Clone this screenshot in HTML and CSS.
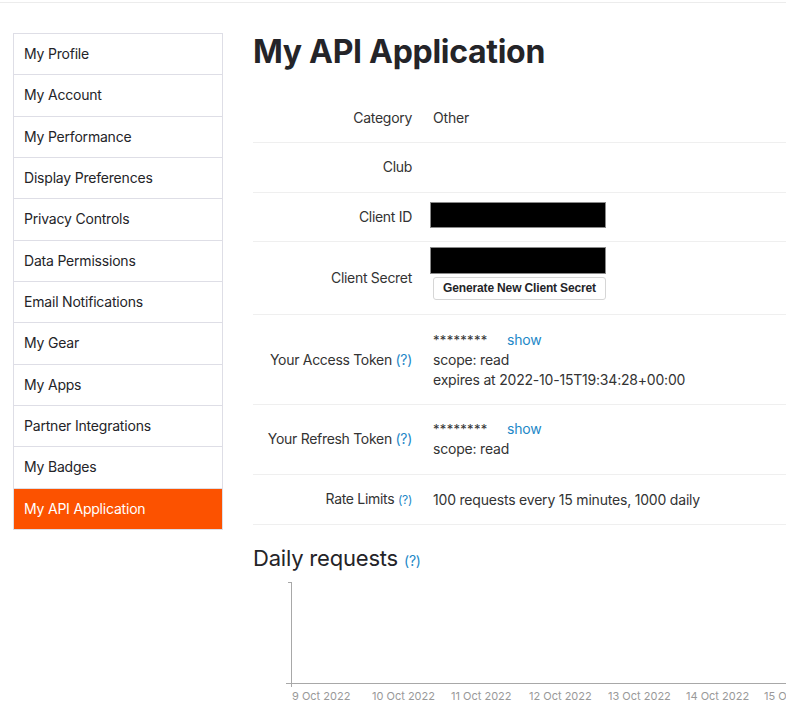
FILE: index.html
```html
<!DOCTYPE html>
<html lang="en">
<head>
<meta charset="utf-8">
<title>My API Application</title>
<link rel="stylesheet" href="styles.css">
</head>
<body>
<div class="topbar"></div>
<div class="page">
  <nav class="sidebar">
    <a class="nav-item" href="#">My Profile</a>
    <a class="nav-item" href="#">My Account</a>
    <a class="nav-item" href="#">My Performance</a>
    <a class="nav-item" href="#">Display Preferences</a>
    <a class="nav-item" href="#">Privacy Controls</a>
    <a class="nav-item" href="#">Data Permissions</a>
    <a class="nav-item" href="#">Email Notifications</a>
    <a class="nav-item" href="#">My Gear</a>
    <a class="nav-item" href="#">My Apps</a>
    <a class="nav-item" href="#">Partner Integrations</a>
    <a class="nav-item" href="#">My Badges</a>
    <a class="nav-item active" href="#">My API Application</a>
  </nav>
  <main class="content">
    <h1 class="title">My API Application</h1>
    <div class="table">
      <div class="row">
        <div class="label">Category</div>
        <div class="value">Other</div>
      </div>
      <div class="row">
        <div class="label">Club</div>
        <div class="value"></div>
      </div>
      <div class="row">
        <div class="label">Client ID</div>
        <div class="value"><span class="redact redact-id"></span></div>
      </div>
      <div class="row">
        <div class="label">Client Secret</div>
        <div class="value">
          <span class="redact redact-secret"></span>
          <button class="btn" type="button">Generate New Client Secret</button>
        </div>
      </div>
      <div class="row">
        <div class="label">Your Access Token <a class="help" href="#">(?)</a></div>
        <div class="value">
          <div><span class="stars">********</span><a class="show" href="#">show</a></div>
          <div>scope: read</div>
          <div>expires at 2022-10-15T19:34:28+00:00</div>
        </div>
      </div>
      <div class="row">
        <div class="label">Your Refresh Token <a class="help" href="#">(?)</a></div>
        <div class="value">
          <div><span class="stars">********</span><a class="show" href="#">show</a></div>
          <div>scope: read</div>
        </div>
      </div>
      <div class="row">
        <div class="label">Rate Limits <a class="help small" href="#">(?)</a></div>
        <div class="value">100 requests every 15 minutes, 1000 daily</div>
      </div>
    </div>
    <h2 class="subtitle">Daily requests <a class="help" href="#">(?)</a></h2>
    <svg class="chart" width="533" height="130" viewBox="0 0 533 130">
      <g stroke="#a8a8a8" stroke-width="1" fill="none" shape-rendering="crispEdges">
        <line x1="38.5" y1="5" x2="38.5" y2="110"/>
        <line x1="35" y1="5.5" x2="38.5" y2="5.5"/>
        <line x1="33" y1="106.5" x2="533" y2="106.5"/>
      </g>
      <g class="ticks" fill="#999" font-size="11">
        <text x="39" y="123">9 Oct 2022</text>
        <text x="119" y="123">10 Oct 2022</text>
        <text x="198" y="123">11 Oct 2022</text>
        <text x="276" y="123">12 Oct 2022</text>
        <text x="355" y="123">13 Oct 2022</text>
        <text x="433" y="123">14 Oct 2022</text>
        <text x="511" y="123">15 Oct 2022</text>
      </g>
    </svg>
  </main>
</div>
</body>
</html>
```
FILE: styles.css
```css
* { box-sizing: border-box; }
html, body { margin: 0; padding: 0; }
body {
  font-family: Inter, "Noto Sans", "Liberation Sans", sans-serif;
  color: #242428;
  background: #fff;
  width: 786px;
  overflow: hidden;
  letter-spacing: -0.2px;
}
.topbar {
  height: 3px;
  border-bottom: 1px solid #ececec;
}
.page {
  display: flex;
  align-items: flex-start;
  padding: 30px 0 0 13px;
  gap: 30px;
}
.sidebar {
  width: 210px;
  flex: none;
  display: flex;
  flex-direction: column;
  border: 1px solid #dedee6;
  border-top: none;
}
.nav-item {
  display: block;
  height: 41.33px;
  line-height: 40px;
  padding-left: 10px;
  border-top: 1px solid #dedee6;
  font-size: 14px;
  color: #242428;
  text-decoration: none;
}
.nav-item.active {
  background: #fc5200;
  color: #fff;
}
.content {
  flex: 1;
  min-width: 0;
  margin-top: -1px;
}
.title {
  margin: 0;
  font-size: 32px;
  font-weight: 700;
  line-height: 40px;
  letter-spacing: -0.3px;
  color: #242428;
}
.table {
  margin-top: 21px;
}
.row {
  display: grid;
  grid-template-columns: 159px 1fr;
  column-gap: 21px;
  align-items: center;
  padding: 14.5px 0 14.25px;
  border-bottom: 1px solid #efefef;
  font-size: 14px;
  line-height: 20px;
  min-height: 49.75px;
}
.label {
  text-align: right;
  color: #333;
  letter-spacing: -0.3px;
}
.value {
  color: #333;
}
.help {
  color: #1e88c7;
  text-decoration: none;
}
.help.small { font-size: 12px; }
.redact {
  display: block;
  width: 176px;
  background: #000;
  border: 1px solid #8a8a8a;
  margin-left: -3px;
}
.redact-id {
  height: 26px;
  margin-top: -5px;
  margin-bottom: -1px;
}
.redact-secret {
  height: 27px;
  margin-top: -10px;
  margin-bottom: 3px;
}
.btn {
  display: block;
  width: 173px;
  height: 23px;
  padding: 0;
  background: #fff;
  border: 1px solid #d6d6d6;
  border-radius: 3px;
  font-family: "Liberation Sans", Arial, sans-serif;
  font-weight: 700;
  font-size: 12px;
  letter-spacing: -0.15px;
  color: #242428;
}
.stars {
  display: inline-block;
  width: 74px;
  font-size: 13px;
  letter-spacing: 0.3px;
}
.show {
  color: #1e88c7;
  text-decoration: none;
}
.subtitle {
  margin: 20px 0 0;
  height: 26px;
  font-size: 22px;
  font-weight: 400;
  line-height: 26px;
  color: #242428;
}
.subtitle .help {
  font-size: 14px;
  line-height: 1;
}
.chart {
  display: block;
  margin-top: 6px;
  font-family: Inter, "Liberation Sans", sans-serif;
  letter-spacing: 0;
}
```
